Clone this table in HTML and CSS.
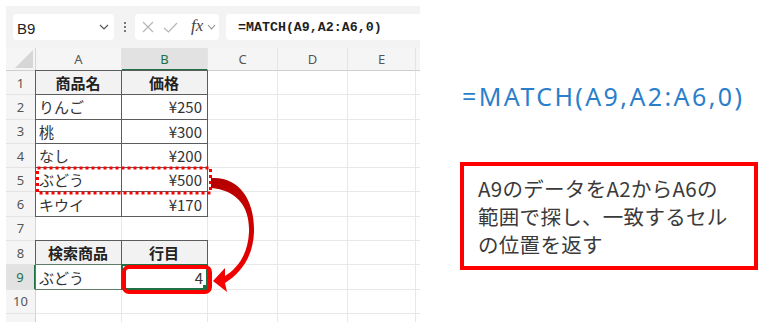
FILE: index.html
```html
<!DOCTYPE html>
<html lang="ja">
<head>
<meta charset="utf-8">
<title>MATCH</title>
<link rel="stylesheet" href="styles.css">
</head>
<body>
<div class="page">
  <div class="excel">
    <div class="toolbar">
      <div class="namebox">
        <span class="nb-text">B9</span>
        <svg class="chev" width="10" height="6" viewBox="0 0 10 6"><path d="M1 1 L5 5 L9 1" fill="none" stroke="#555" stroke-width="1.2"/></svg>
      </div>
      <div class="kebab"><i></i><i></i><i></i></div>
      <div class="fxbox">
        <svg class="ico" width="12" height="12" viewBox="0 0 12 12"><path d="M1 1 L11 11 M11 1 L1 11" stroke="#b5b5b5" stroke-width="1.2" fill="none"/></svg>
        <svg class="ico" width="15" height="11" viewBox="0 0 15 11"><path d="M1 6 L5.5 10 L14 1" stroke="#b5b5b5" stroke-width="1.2" fill="none"/></svg>
        <span class="fx">fx</span>
        <svg class="chev2" width="9" height="6" viewBox="0 0 9 6"><path d="M1 1 L4.5 5 L8 1" fill="none" stroke="#888" stroke-width="1.1"/></svg>
      </div>
      <div class="formula">=MATCH(A9,A2:A6,0)</div>
    </div>
    <div class="grid">
      <div class="corner"><span class="tri"></span></div>
      <div class="ch">A</div><div class="ch sel">B</div><div class="ch">C</div><div class="ch">D</div><div class="ch">E</div><div class="ch"></div>

      <div class="rh">1</div><div class="c t hd">商品名</div><div class="c t hd">価格</div><div class="c"></div><div class="c"></div><div class="c"></div><div class="c"></div>
      <div class="rh">2</div><div class="c t">りんご</div><div class="c t r">¥250</div><div class="c"></div><div class="c"></div><div class="c"></div><div class="c"></div>
      <div class="rh">3</div><div class="c t">桃</div><div class="c t r">¥300</div><div class="c"></div><div class="c"></div><div class="c"></div><div class="c"></div>
      <div class="rh">4</div><div class="c t">なし</div><div class="c t r">¥200</div><div class="c"></div><div class="c"></div><div class="c"></div><div class="c"></div>
      <div class="rh">5</div><div class="c t">ぶどう</div><div class="c t r">¥500</div><div class="c"></div><div class="c"></div><div class="c"></div><div class="c"></div>
      <div class="rh">6</div><div class="c t">キウイ</div><div class="c t r">¥170</div><div class="c"></div><div class="c"></div><div class="c"></div><div class="c"></div>
      <div class="rh">7</div><div class="c"></div><div class="c"></div><div class="c"></div><div class="c"></div><div class="c"></div><div class="c"></div>
      <div class="rh">8</div><div class="c t hd">検索商品</div><div class="c t hd">行目</div><div class="c"></div><div class="c"></div><div class="c"></div><div class="c"></div>
      <div class="rh sel">9</div><div class="c t g">ぶどう</div><div class="c t r active">4<span class="handle"></span></div><div class="c"></div><div class="c"></div><div class="c"></div><div class="c"></div>
      <div class="rh">10</div><div class="c"></div><div class="c"></div><div class="c"></div><div class="c"></div><div class="c"></div><div class="c"></div>
      <div class="rh"></div><div class="c"></div><div class="c"></div><div class="c"></div><div class="c"></div><div class="c"></div><div class="c"></div>
    </div>
  </div>
  <div class="side">
    <div class="big">=MATCH(A9,A2:A6,0)</div>
    <div class="note">A9のデータをA2からA6の<br>範囲で探し、一致するセル<br>の位置を返す</div>
  </div>
  <svg class="overlay" width="770" height="329" viewBox="0 0 770 329">
    <defs>
      <linearGradient id="ag" x1="0" y1="0" x2="0" y2="1">
        <stop offset="0" stop-color="#b40000"/>
        <stop offset="0.55" stop-color="#d80000"/>
        <stop offset="1" stop-color="#ff0000"/>
      </linearGradient>
    </defs>
    <rect x="37.5" y="168" width="173" height="25" fill="none" stroke="#ff0000" stroke-width="3" stroke-dasharray="3 3"/>
    <rect x="124" y="267" width="86" height="25" rx="5" ry="5" fill="none" stroke="#ff0000" stroke-width="4"/>
    <path d="M211 178 C239 176 255 200 254 232 C253 257 241 273 225 283 L227 292 L213 281 L225 268 L225 276 C238 268 248 254 249 232 C250 206 236 190 211 188 Z" fill="url(#ag)"/>
  </svg>
</div>
</body>
</html>
```

FILE: styles.css
```css
* { box-sizing: border-box; }
html, body { margin: 0; padding: 0; background: #fff; }
.page {
  position: relative;
  width: 770px;
  height: 329px;
  display: flex;
  padding: 6px 0 0 6px;
  overflow: hidden;
}
.excel {
  width: 414px;
  height: 316px;
  background: #f3f3f3;
  display: flex;
  flex-direction: column;
  overflow: hidden;
}
.toolbar {
  height: 42px;
  flex: none;
  display: flex;
  align-items: flex-start;
  padding: 8px 0 0 7px;
}
.namebox {
  width: 101px;
  height: 26px;
  background: #fff;
  border-radius: 4px;
  display: flex;
  align-items: center;
  justify-content: space-between;
  padding: 0 5px 0 4px;
}
.nb-text {
  font: 15px "Liberation Sans", Arial, sans-serif;
  color: #222;
  margin-top: 3px;
}
.kebab {
  width: 21px;
  height: 26px;
  display: flex;
  flex-direction: column;
  align-items: center;
  justify-content: center;
  gap: 2px;
}
.kebab i {
  display: block;
  width: 2px;
  height: 2px;
  background: #777;
}
.fxbox {
  width: 84px;
  height: 26px;
  background: #fff;
  border-radius: 4px;
  display: flex;
  align-items: center;
  padding-left: 7px;
}
.fxbox .ico { margin-right: 9px; }
.fxbox .ico + .ico { margin-right: 13px; }
.fx {
  font: italic 17px "Liberation Serif", "DejaVu Serif", serif;
  color: #444;
  margin-right: 4px;
  margin-top: -2px;
}
.formula {
  margin-left: 7px;
  flex: 1;
  height: 26px;
  background: #fff;
  border-radius: 4px 0 0 4px;
  display: flex;
  align-items: center;
  padding-left: 12px;
  font: 13.3px "Liberation Mono", "DejaVu Sans Mono", monospace;
  color: #1e1e1e;
  font-weight: 600;
}
.grid {
  display: grid;
  grid-template-columns: 30px 86px 86px 70px 70px 68px 1fr;
  grid-template-rows: 23px repeat(11, 24.3px);
  background: #fff;
}
.grid > div {
  display: flex;
  align-items: center;
  overflow: hidden;
  white-space: nowrap;
  position: relative;
}
.corner {
  background: #f5f5f5;
  border-right: 1px solid #d4d4d4;
  border-bottom: 1px solid #cfcfcf;
}
.tri {
  position: absolute;
  right: 2px;
  bottom: 2px;
  width: 0;
  height: 0;
  border-left: 18px solid transparent;
  border-bottom: 18px solid #d6d6d6;
}
.ch {
  background: #f5f5f5;
  justify-content: center;
  font: 13px "Noto Sans", "Liberation Sans", sans-serif;
  color: #555;
  border-right: 1px solid #e4e4e4;
  border-bottom: 1px solid #cfcfcf;
}
.ch.sel {
  background: #e2e2e2;
  color: #1e7145;
  border-bottom: 2px solid #1e7145;
}
.rh {
  background: #f5f5f5;
  justify-content: center;
  font: 13px "Noto Sans", "Liberation Sans", sans-serif;
  color: #555;
  border-right: 1px solid #d4d4d4;
  border-bottom: 1px solid #e4e4e4;
}
.rh.sel {
  background: #e2e2e2;
  color: #1e7145;
  border-right: 2px solid #1e7145;
}
.c {
  border-right: 1px solid #e8e8e8;
  border-bottom: 1px solid #e8e8e8;
  padding: 0 4px 0 3px;
  font: 15px "Noto Sans CJK JP", "Noto Sans", sans-serif;
  color: #333;
}
.c.t {
  border: 1px solid #5c5c5c;
  margin: -1px 0 0 -1px;
}
.c.hd {
  background: #f2f2f2;
  font-weight: 700;
  justify-content: center;
  color: #222;
}
.c.r { justify-content: flex-end; padding-right: 5px; }
.c.g { border-color: #5d7d68; }
.c.active {
  border: 2px solid #1e7145;
  margin: -1px 0 0 -1px;
  padding-right: 3px;
}
.handle {
  position: absolute;
  right: -1px;
  bottom: -1px;
  width: 5px;
  height: 5px;
  background: #1e7145;
  border: 1px solid #fff;
}
.side {
  margin-left: 40px;
  display: flex;
  flex-direction: column;
}
.big {
  margin-top: 75px;
  height: 30px;
  font: 25px/30px "Noto Sans", "Liberation Sans", sans-serif;
  letter-spacing: 2.4px;
  color: #2b7fca;
  white-space: nowrap;
  padding-left: 2px;
}
.note {
  margin-top: 51px;
  width: 298px;
  height: 108px;
  border: 4px solid #ff0000;
  padding: 8px 0 0 14px;
  font: 20.5px/28px "Noto Sans CJK JP", sans-serif;
  color: #3a3a3a;
  white-space: nowrap;
  letter-spacing: 0.3px;
}
.overlay {
  position: absolute;
  top: 0;
  left: 0;
  pointer-events: none;
}
```
